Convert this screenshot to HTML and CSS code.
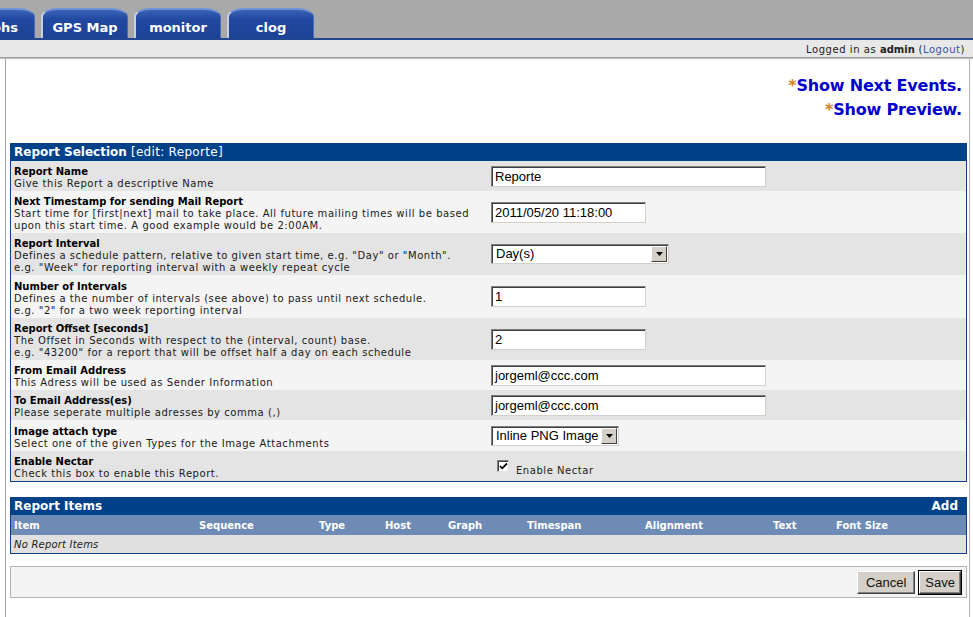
FILE: index.html
```html
<!DOCTYPE html>
<html>
<head>
<meta charset="utf-8">
<title>Report</title>
<link rel="stylesheet" href="styles.css">
</head>
<body>
<div class="topbar">
  <div class="tabs">
    <div class="tab first">Graphs</div>
    <div class="tab">GPS Map</div>
    <div class="tab">monitor</div>
    <div class="tab">clog</div>
  </div>
</div>
<div class="loginbar">Logged in as <b>admin</b> (<a class="logout">Logout</a>)</div>
<div class="main">
  <div class="links">
    <div class="link"><span class="star">*</span>Show Next Events.</div>
    <div class="link"><span class="star">*</span>Show Preview.</div>
  </div>

  <table class="form">
    <tr><th colspan="2" class="head"><b>Report Selection</b> [edit: Reporte]</th></tr>
    <tr class="odd">
      <td class="label"><b>Report Name</b><br>Give this Report a descriptive Name</td>
      <td class="field"><div class="input wide">Reporte</div></td>
    </tr>
    <tr class="even">
      <td class="label"><b>Next Timestamp for sending Mail Report</b><br>Start time for [first|next] mail to take place. All future mailing times will be based<br>upon this start time. A good example would be 2:00AM.</td>
      <td class="field"><div class="input mid">2011/05/20 11:18:00</div></td>
    </tr>
    <tr class="odd">
      <td class="label"><b>Report Interval</b><br>Defines a schedule pattern, relative to given start time, e.g. "Day" or "Month".<br>e.g. "Week" for reporting interval with a weekly repeat cycle</td>
      <td class="field"><div class="select sel1"><span class="seltext">Day(s)</span><span class="arrow"><svg width="7" height="4" viewBox="0 0 7 4"><path d="M0 0H7L3.5 4Z" fill="#000"/></svg></span></div></td>
    </tr>
    <tr class="even">
      <td class="label tall"><b>Number of Intervals</b><br>Defines a the number of intervals (see above) to pass until next schedule.<br>e.g. "2" for a two week reporting interval</td>
      <td class="field"><div class="input mid">1</div></td>
    </tr>
    <tr class="odd">
      <td class="label"><b>Report Offset [seconds]</b><br>The Offset in Seconds with respect to the (interval, count) base.<br>e.g. "43200" for a report that will be offset half a day on each schedule</td>
      <td class="field"><div class="input mid">2</div></td>
    </tr>
    <tr class="even">
      <td class="label"><b>From Email Address</b><br>This Adress will be used as Sender Information</td>
      <td class="field"><div class="input wide">jorgeml@ccc.com</div></td>
    </tr>
    <tr class="odd">
      <td class="label"><b>To Email Address(es)</b><br>Please seperate multiple adresses by comma (,)</td>
      <td class="field"><div class="input wide">jorgeml@ccc.com</div></td>
    </tr>
    <tr class="even">
      <td class="label tall"><b>Image attach type</b><br>Select one of the given Types for the Image Attachments</td>
      <td class="field"><div class="select sel2"><span class="seltext">Inline PNG Image</span><span class="arrow"><svg width="7" height="4" viewBox="0 0 7 4"><path d="M0 0H7L3.5 4Z" fill="#000"/></svg></span></div></td>
    </tr>
    <tr class="odd">
      <td class="label"><b>Enable Nectar</b><br>Check this box to enable this Report.</td>
      <td class="field"><div class="checkrow"><span class="checkbox"><svg width="9" height="9" viewBox="0 0 9 9"><path d="M1 4L3.2 6.3L8 1.5" stroke="#000" stroke-width="1.8" fill="none"/></svg></span><span class="checklabel">Enable Nectar</span></div></td>
    </tr>
  </table>

  <div class="items">
    <div class="itemshead"><b>Report Items</b><b>Add</b></div>
    <div class="cols">
      <span>Item</span><span>Sequence</span><span>Type</span><span>Host</span><span>Graph</span><span>Timespan</span><span>Alignment</span><span>Text</span><span>Font Size</span>
    </div>
    <div class="noitems">No Report Items</div>
  </div>

  <div class="buttons">
    <div class="btn cancel">Cancel</div>
    <div class="btn default">Save</div>
  </div>
</div>
</body>
</html>
```

FILE: styles.css
```css
html, body {
  margin: 0;
  padding: 0;
  background: #ffffff;
  height: 100%;
}
body {
  font-family: "DejaVu Sans", Verdana, sans-serif;
  font-size: 10px;
  letter-spacing: 0.55px;
  color: #111;
  overflow: hidden;
}
b {
  letter-spacing: 0;
}
.topbar {
  height: 38px;
  background: #a9a9a9;
  border-bottom: 2px solid #22468f;
  display: flex;
  align-items: flex-end;
  overflow: hidden;
}
.tabs {
  display: flex;
  gap: 6px;
  margin-left: -52px;
}
.tab {
  width: 87px;
  height: 30px;
  box-sizing: border-box;
  border-radius: 16px 16px 0 0 / 9px 9px 0 0;
  background: linear-gradient(#3a62b6 0%, #2148a0 35%, #1c4396 100%);
  border-top: 2px solid #6f92d8;
  border-left: 2px solid #c8cfe0;
  border-right: 1px solid #4a6cb4;
  color: #fff;
  font-weight: bold;
  font-size: 13px;
  letter-spacing: 0;
  text-align: center;
  padding-top: 10px;
  line-height: 16px;
}
.loginbar {
  height: 18px;
  box-sizing: border-box;
  background: #e8e8e8;
  border-bottom: 1px solid #9a9a9a;
  box-shadow: 0 1px 1px #c4c4c4;
  text-align: right;
  padding: 2px 8px 0 0;
  line-height: 16px;
  font-size: 10px;
  color: #222;
}
.logout {
  color: #3a52a8;
}
.main {
  margin: 1px 3px 0 5px;
  border-left: 1px solid #a0a0a0;
  border-right: 1px solid #b0b0b0;
  padding: 0 2px 0 4px;
  height: calc(100vh - 59px);
  box-sizing: border-box;
}
.links {
  padding: 15px 5px 0 0;
  text-align: right;
  margin-bottom: 21px;
}
.link {
  font-size: 16px;
  font-weight: bold;
  letter-spacing: -0.2px;
  color: #0000cc;
  line-height: 24px;
}
.star {
  color: #d2822a;
}
.form {
  width: 957px;
  border-collapse: collapse;
  border: 1px solid #0d3f86;
}
.head {
  background: #00428a;
  color: #fff;
  font-weight: normal;
  text-align: left;
  font-size: 12px;
  letter-spacing: 0.3px;
  line-height: 17px;
  padding: 0 3px;
}
.head b {
  letter-spacing: 0;
}
.odd { background: #e4e4e4; }
.even { background: #f4f4f4; }
.label {
  width: 470px;
  padding: 5px 4px 1px 3px;
  line-height: 12px;
  vertical-align: middle;
  color: #1a1a1a;
}
.label.tall {
  padding-top: 6px;
}
.label b {
  color: #000;
}
.field {
  padding: 0 0 0 3px;
  vertical-align: middle;
}
.input {
  box-sizing: border-box;
  height: 21px;
  background: #fff;
  border-top: 1px solid #7e7e7e;
  border-left: 1px solid #7e7e7e;
  border-right: 1px solid #d4d0c8;
  border-bottom: 1px solid #d4d0c8;
  box-shadow: inset 1px 1px 0 #404040;
  font-family: "Liberation Sans", Arial, sans-serif;
  font-size: 13px;
  letter-spacing: 0;
  line-height: 19px;
  padding-left: 3px;
  color: #000;
}
.wide { width: 275px; }
.mid { width: 155px; }
.select {
  box-sizing: border-box;
  height: 20px;
  display: flex;
  align-items: stretch;
  background: #fff;
  border-top: 1px solid #7e7e7e;
  border-left: 1px solid #7e7e7e;
  border-right: 1px solid #d4d0c8;
  border-bottom: 1px solid #d4d0c8;
  box-shadow: inset 1px 1px 0 #404040;
  padding: 1px;
  font-family: "Liberation Sans", Arial, sans-serif;
  font-size: 13px;
  letter-spacing: 0;
  color: #000;
}
.sel1 { width: 178px; }
.sel2 { width: 128px; }
.seltext {
  flex: 1;
  padding-left: 3px;
  line-height: 16px;
  white-space: nowrap;
}
.arrow {
  width: 16px;
  box-sizing: border-box;
  background: #d4d0c8;
  border-top: 1px solid #fff;
  border-left: 1px solid #fff;
  border-right: 1px solid #404040;
  border-bottom: 1px solid #404040;
  display: flex;
  align-items: center;
  justify-content: center;
}
.checkrow {
  display: flex;
  align-items: center;
  padding-left: 6px;
  padding-top: 4px;
}
.checkbox {
  width: 12px;
  height: 12px;
  box-sizing: border-box;
  background: #fff;
  border-top: 1px solid #808080;
  border-left: 1px solid #808080;
  border-right: 1px solid #e0e0e0;
  border-bottom: 1px solid #e0e0e0;
  box-shadow: inset 1px 1px 0 #404040;
  display: flex;
  align-items: center;
  justify-content: center;
  margin-top: -4px;
}
.checklabel {
  margin-left: 7px;
  color: #222;
  margin-top: 4px;
}
.items {
  margin-top: 15px;
  border: 1px solid #0d3f86;
}
.itemshead {
  background: #00428a;
  color: #fff;
  font-size: 12px;
  line-height: 17px;
  display: flex;
  justify-content: space-between;
  padding: 0 8px 0 3px;
}
.cols {
  background: #6e8bb6;
  color: #fff;
  font-weight: bold;
  letter-spacing: 0;
  line-height: 19px;
  padding-top: 1px;
  display: grid;
  grid-template-columns: 185px 120px 66px 63px 79px 118px 128px 63px 1fr;
  padding-left: 3px;
}
.noitems {
  background: #e0e0e0;
  font-style: italic;
  letter-spacing: 0.2px;
  line-height: 17px;
  padding: 1px 0 0 3px;
  color: #222;
}
.buttons {
  margin-top: 12px;
  border: 1px solid #b4b4b4;
  background: #f3f3f3;
  height: 30px;
  display: flex;
  justify-content: flex-end;
  align-items: center;
  gap: 4px;
  padding-right: 5px;
}
.btn {
  box-sizing: border-box;
  height: 23px;
  padding: 0 6px;
  background: #d4d0c8;
  border-top: 1px solid #fff;
  border-left: 1px solid #fff;
  border-right: 1px solid #404040;
  border-bottom: 1px solid #404040;
  box-shadow: inset -1px -1px 0 #808080;
  font-family: "Liberation Sans", Arial, sans-serif;
  font-size: 13px;
  letter-spacing: 0;
  line-height: 21px;
  color: #111;
}
.cancel {
  padding: 0 8px;
}
.default {
  outline: 1px solid #000;
  padding: 0 5px;
}
```
